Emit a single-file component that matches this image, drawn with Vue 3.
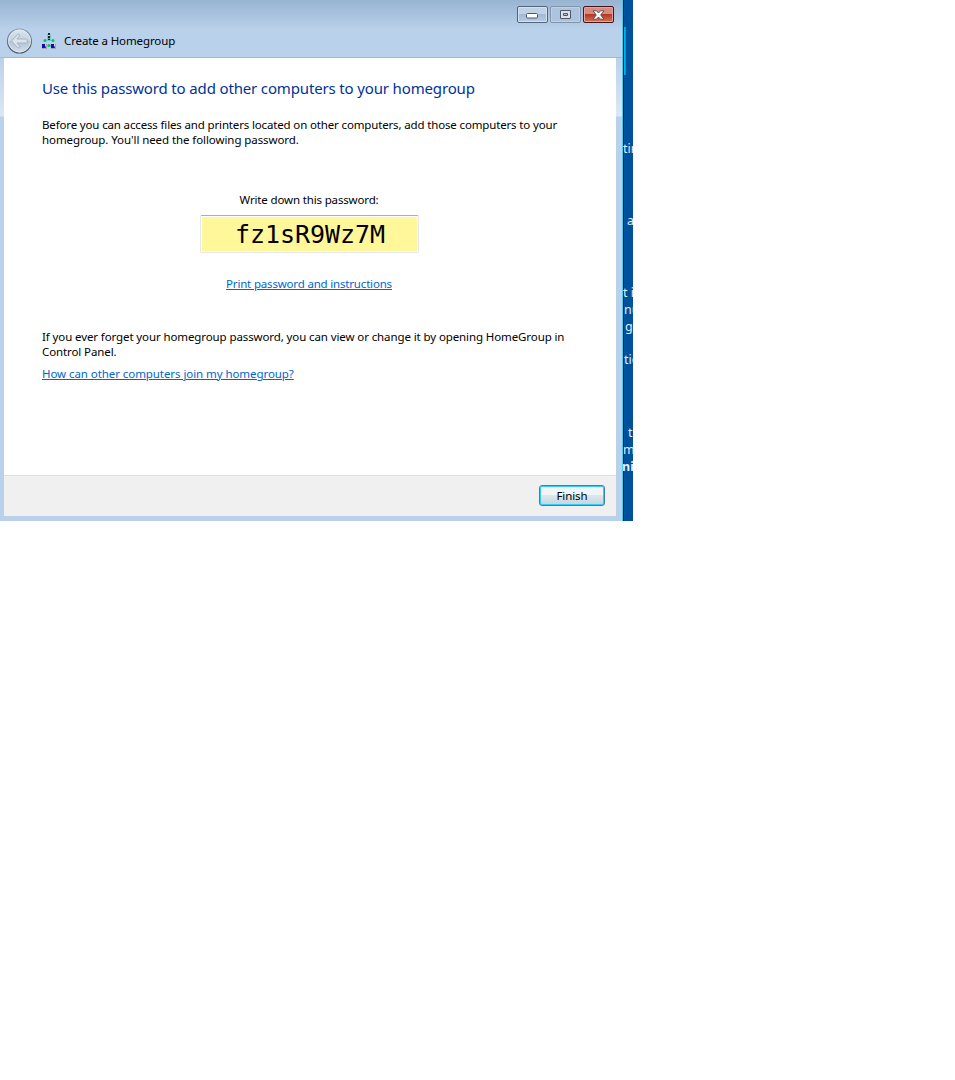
<script setup>
const fragments = [
  { top: 141, x: 0, text: 'ting' },
  { top: 213, x: 4, text: 'a' },
  { top: 285, x: 0, text: 't is' },
  { top: 302, x: 1, text: 'nu' },
  { top: 319, x: 2, text: 'g' },
  { top: 352, x: 1, text: 'tio' },
  { top: 425, x: 5, text: 't' },
  { top: 442, x: 0, text: 'm' },
  { top: 459, x: -1, text: 'nis', bold: true },
]
</script>

<template>
  <div class="scene">
    <section class="window">
      <header class="titlebar">
        <div class="controls">
          <button class="ctl min" aria-label="Minimize">
            <svg width="12" height="6" viewBox="0 0 12 6"><rect x=".5" y=".5" width="11" height="4.500" rx="1" fill="#fff" stroke="#535666" /></svg>
          </button>
          <button class="ctl max" aria-label="Maximize">
            <svg width="11" height="9" viewBox="0 0 11 9"><path d="M.5.5h10v8H.5z" fill="#dce2ea" stroke="#535666" /><path d="M3.5 3.5h4v2h-4z" fill="#a9bfd7" stroke="#535666" /></svg>
          </button>
          <button class="ctl close" aria-label="Close">
            <svg width="13" height="10" viewBox="0 0 13 10"><path d="M1 .8h3.500l2 2.200 2-2.200H12L8.700 5l3.300 4.200H8.500l-2-2.200-2 2.200H1L4.300 5z" fill="#fff" stroke="#535666" /></svg>
          </button>
        </div>
        <div class="caption">
          <svg class="back" width="26" height="26" viewBox="0 0 26 26">
            <defs>
              <linearGradient id="orb" x1="0" y1="0" x2="0" y2="1">
                <stop offset="0" stop-color="#dbe5ef" /><stop offset=".48" stop-color="#c5d2df" />
                <stop offset=".52" stop-color="#b4c4d5" /><stop offset="1" stop-color="#d0deec" />
              </linearGradient>
              <linearGradient id="rim" x1="0" y1="0" x2="0" y2="1">
                <stop offset="0" stop-color="#8c9bae" /><stop offset="1" stop-color="#445365" />
              </linearGradient>
            </defs>
            <circle cx="13.500" cy="13" r="12" fill="url(#orb)" stroke="url(#rim)" stroke-width="1.2" />
            <circle cx="13.500" cy="13" r="11" fill="none" stroke="#e9f0f7" stroke-opacity=".7" />
            <path d="M5.500 13l6-6.500c1-.8 3 0 2 1.500l-2.600 3H20.500c1 0 1 4 0 4h-9.600l2.600 3c1 1.500-1 2.300-2 1.500z" fill="#dbe4ed" stroke="#a4b3c2" stroke-linejoin="round" />
          </svg>
          <svg class="app-icon" width="16" height="16" viewBox="0 0 16 16">
            <path d="M6 1h4v7H6z" fill="#74c8cb" /><path d="M7 0h2v2H7zM7 3h2v4H7z" fill="#15252e" /><path d="M7.500 2h1v1h-1zM7.500 5h1v1h-1z" fill="#e6ffff" />
            <circle cx="4" cy="7.500" r="1.500" fill="#0bbf69" /><circle cx="12" cy="7.500" r="1.500" fill="#0bbf69" /><circle cx="8" cy="12.500" r="1.600" fill="#0bbf69" />
            <path d="M1 11h5v5H1zM10 11h5v5h-5z" fill="#a3a5b4" />
            <path d="M1 11h3v2l1 2H1zM10 11h3v2l1 2h-4z" fill="#1010b0" />
            <path d="M4 11h1v2H4zM13 11h1v2h-1z" fill="#bfd5ff" />
          </svg>
          <span class="title">Create a Homegroup</span>
        </div>
      </header>

      <div class="client">
        <main class="page">
          <h1>Use this password to add other computers to your homegroup</h1>
          <p class="intro"><span class="intro-first">Before you can access files and printers located on other computers, add those computers to your</span><br />homegroup. You'll need the following password.</p>
          <div class="password-group">
            <label>Write down this password:</label>
            <div class="password">fz1sR9Wz7M</div>
            <a class="print">Print password and instructions</a>
          </div>
          <p class="hint">If you ever forget your homegroup password, you can view or change it by opening HomeGroup in<br />Control Panel.</p>
          <a class="help">How can other computers join my homegroup?</a>
        </main>
        <footer><button class="finish">Finish</button></footer>
      </div>
    </section>

    <aside class="desktop">
      <span class="glow"></span>
      <span v-for="f in fragments" :key="f.top" class="fragment" :class="{ bold: f.bold }" :style="{ top: f.top + 'px', left: f.x + 'px' }">{{ f.text }}</span>
    </aside>
  </div>
</template>

<style>
html, body { margin: 0; background: #fff; }
</style>

<style scoped>
.scene { display: flex; width: 633px; height: 521px; overflow: hidden; font: 11.5px/15px "Noto Sans", "Open Sans", sans-serif; color: #000; }
.window { box-sizing: border-box; width: 623px; height: 521px; padding: 0 6px 5px 4px; border-right: 1px solid #38d5f7; background: linear-gradient(#99b4d1 0, #a5bfdc 12px, #b9d1ea 29px, #b9d1ea 57px, #dce8f5 116px, #b9d1ea 117px); }
.titlebar { box-sizing: border-box; height: 58px; margin: 0 -6px 0 -4px; border-bottom: 1px solid #a2b9d1; background: linear-gradient(#99b4d1 0, #a5bfdc 12px, #b9d1ea 29px); }
.controls { box-sizing: border-box; display: flex; gap: 2px; justify-content: flex-end; height: 24px; padding: 6px 8px 0 0; }
.ctl { box-sizing: border-box; display: flex; align-items: center; justify-content: center; width: 31px; height: 17px; padding: 0; border: 1px solid #53647a; border-radius: 2px; box-shadow: inset 0 0 0 1px #d5e2f1; background: linear-gradient(#c0d2e6 48%, #a2bad5 50%, #b4cbe5); }
.min svg { margin: 3px 1px 0 0; }
.max { border-color: #8194ac; box-shadow: inset 0 0 0 1px #bfd1e7; background: #adc4df; }
.close { border-color: #45131d; box-shadow: inset 0 0 0 1px #e1a69d; background: linear-gradient(#d88c7f 48%, #b83822 50%, #cf765c); }
.caption { display: flex; align-items: center; height: 34px; padding-left: 6px; }
.app-icon { margin-left: 9px; }
.title { margin: -1px 0 0 7px; letter-spacing: -.12px; }
.client { width: 612px; height: 458px; display: flex; flex-direction: column; background: #fff; }
.page { flex: 1; padding: 20px 0 0 38px; white-space: nowrap; box-sizing: border-box; }
h1 { margin: 0; height: 23px; font: 15px/20px "Noto Sans", "Open Sans", sans-serif; color: #003399; letter-spacing: -.15px; }
p { margin: 0; }
.intro { margin-top: 16px; letter-spacing: -.08px; }
.intro-first { letter-spacing: -.15px; }
.password-group { width: 534px; display: flex; flex-direction: column; align-items: center; margin-top: 45px; letter-spacing: -.15px; }
.password { box-sizing: border-box; width: 219px; height: 38px; margin: 8px 0 23px; padding-left: 2px; border: 1px solid #e3e9ef; border-top-color: #abadb3; border-radius: 2px; background: #fff799; box-shadow: inset 0 0 0 1px #fff; font: 25px/37px "DejaVu Sans Mono", monospace; text-align: center; letter-spacing: -.05px; }
.print { letter-spacing: -.18px; }
a { color: #0066cc; text-decoration: underline; text-underline-offset: 1px; text-decoration-thickness: 1px; }
.hint { margin-top: 38px; letter-spacing: -.105px; }
.help { display: block; margin-top: 7px; letter-spacing: -.07px; }
footer { box-sizing: border-box; display: flex; justify-content: flex-end; height: 41px; padding: 9px 11px 0 0; border-top: 1px solid #dfdfdf; background: #f0f0f0; }
.finish { box-sizing: border-box; width: 66px; height: 21px; padding: 0; border: 1px solid #3c7fb1; border-radius: 3px; box-shadow: inset 0 0 0 1px #35cdf5; background: linear-gradient(#f0f5f8 48%, #dce7ed 50%, #c3d5df); font: 11.5px/17px "Noto Sans", sans-serif; color: #000; letter-spacing: -.1px; }
.desktop { position: relative; width: 10px; height: 521px; box-sizing: border-box; overflow: hidden; background: linear-gradient(90deg, #001522 1px, #00519b 1px); }
.glow { position: absolute; left: 1px; top: 27px; width: 2px; height: 48px; background: linear-gradient(90deg, #00c5f5, #0085cd); }
.fragment { position: absolute; color: #e4edf6; font-size: 12.5px; line-height: 16px; white-space: nowrap; }
.bold { font-weight: bold; }
</style>
